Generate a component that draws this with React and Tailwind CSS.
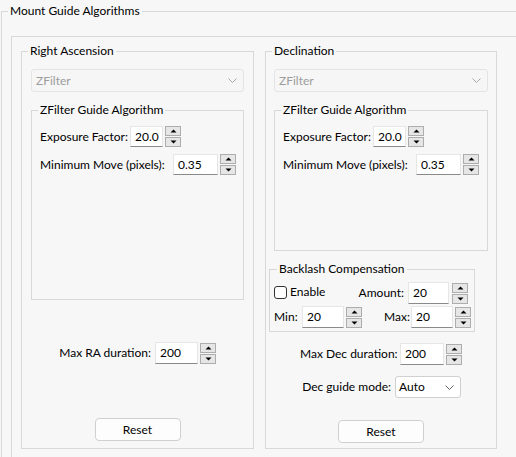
import React from "react";

const Arrow = ({ down }) => (
  <svg width="7" height="4" viewBox="0 0 7 4">
    <path d={down ? "M0.5 0.5h6L3.5 3.5z" : "M3.5 0.5L6.5 3.5h-6z"} fill="#000" />
  </svg>
);

const Spin = ({ h = "h-[10px]", ml = "ml-[2px]" }) => (
  <div className={`flex flex-col gap-[1px] ${ml}`}>
    <div className={`w-[16px] ${h} border border-[#adadad] bg-[#e6e6e6] flex items-center justify-center`}>
      <Arrow />
    </div>
    <div className={`w-[16px] ${h} border border-[#adadad] bg-[#e6e6e6] flex items-center justify-center`}>
      <Arrow down />
    </div>
  </div>
);

const NumBox = ({ value, w, h = "h-[21px]" }) => (
  <div
    className={`${w} ${h} bg-white border border-[#e6e6e6] border-b-[#8a8a8a] flex items-center pl-[4px] text-black`}
  >
    {value}
  </div>
);

const Chevron = ({ color = "#a8a8a8" }) => (
  <svg width="9" height="5" viewBox="0 0 9 5" fill="none">
    <path d="M0.5 0.5L4.5 4.5L8.5 0.5" stroke={color} strokeWidth="1" />
  </svg>
);

const DisabledCombo = () => (
  <div className="h-[23px] border border-[#e4e4e4] rounded-[3px] bg-[#f6f6f6] flex items-center justify-between pl-[4px] pr-[6px] text-[#9c9c9c]">
    <span>ZFilter</span>
    <Chevron />
  </div>
);

const Group = ({ title, className = "", children }) => (
  <fieldset className={`border border-[#d8d8d8] pl-[6px] ${className}`}>
    <legend className="px-[2px] leading-[16px]">{title}</legend>
    {children}
  </fieldset>
);

const ZFilterGroup = ({ pb }) => (
  <Group title="ZFilter Guide Algorithm" className={`mt-[10px] ${pb}`}>
    <div className="flex flex-col gap-[7px] pt-[8px] pl-[2px]">
      <div className="flex items-center">
        <span className="w-[90px]">Exposure Factor:</span>
        <NumBox value="20.0" w="w-[33px]" />
        <Spin />
      </div>
      <div className="flex items-center">
        <span className="w-[133px]">Minimum Move (pixels):</span>
        <NumBox value="0.35" w="w-[45px]" />
        <Spin />
      </div>
    </div>
  </Group>
);

const ResetButton = ({ mt }) => (
  <div className={`flex justify-center ${mt}`}>
    <button className="w-[86px] h-[23px] bg-[#fdfdfd] border border-[#d0d0d0] rounded-[4px] text-black">
      Reset
    </button>
  </div>
);

export default function App() {
  return (
    <div className="w-[516px] h-[457px] overflow-hidden whitespace-nowrap bg-[#f7f7f7] text-[12px] leading-[16px] text-black font-['Lato','Noto_Sans',sans-serif]">
      <fieldset className="mt-[3px] ml-[1px] w-[600px] border-l border-t border-[#d8d8d8] pl-[6px] pt-[17px]">
        <legend className="px-[2px] leading-[16px]">Mount Guide Algorithms</legend>
        <div className="ml-[3px] border-l border-t border-[#d8d8d8] pt-[6px] pl-[9px] h-[460px]">
          <div className="flex gap-[11px] items-stretch">
            {/* Right Ascension */}
            <Group title="Right Ascension" className="w-[233px] shrink-0 pb-[7px]">
              <div className="pt-[10px] pl-[3px] pr-[9px]">
                <DisabledCombo />
                <ZFilterGroup pb="pb-[124px]" />
                <div className="flex justify-center items-center mt-[42px]">
                  <span className="w-[92px] text-right">Max RA duration:</span>
                  <div className="w-[4px]" />
                  <NumBox value="200" w="w-[43px]" h="h-[22px]" />
                  <Spin />
                </div>
                <ResetButton mt="mt-[54px]" />
              </div>
            </Group>

            {/* Declination */}
            <Group title="Declination" className="w-[232px] shrink-0 pb-[5px]">
              <div className="pt-[10px] pl-[2px] pr-[8px]">
                <DisabledCombo />
                <ZFilterGroup pb="pb-[75px]" />
                <fieldset className="ml-[-5px] w-[206px] mt-[10px] border border-[#d8d8d8] pl-[7px] pb-[3px]">
                  <legend className="px-[2px] leading-[16px]">Backlash Compensation</legend>
                  <div className="pt-[5px] ml-[-3px] flex flex-col gap-[2px]">
                    <div className="flex items-center h-[22px]">
                      <div className="w-[80px] flex items-center self-start mt-[2px]">
                        <div className="w-[13px] h-[13px] rounded-[3px] border border-[#333] bg-white" />
                        <span className="ml-[3px]">Enable</span>
                      </div>
                      <span className="w-[50px] text-right">Amount:</span>
                      <div className="w-[4px]" />
                      <NumBox value="20" w="w-[41px]" h="h-[22px]" />
                      <Spin ml="ml-[3px]" />
                    </div>
                    <div className="flex items-center h-[22px]">
                      <span className="w-[28px]">Min:</span>
                      <NumBox value="20" w="w-[42px]" h="h-[22px]" />
                      <Spin ml="ml-[2px]" />
                      <span className="w-[48px] text-right">Max:</span>
                      <div className="w-[1px]" />
                      <NumBox value="20" w="w-[42px]" h="h-[22px]" />
                      <Spin ml="ml-[2px]" />
                    </div>
                  </div>
                </fieldset>
                <div className="flex justify-center items-center mt-[11px]">
                  <span className="w-[96px] text-right">Max Dec duration:</span>
                  <div className="w-[4px]" />
                  <NumBox value="200" w="w-[44px]" h="h-[22px]" />
                  <Spin />
                </div>
                <div className="flex justify-center items-center mt-[11px]">
                  <span className="w-[90px] text-right">Dec guide mode:</span>
                  <div className="w-[4px]" />
                  <div className="w-[66px] h-[22px] bg-white border border-[#d0d0d0] rounded-[3px] flex items-center justify-between pl-[3px] pr-[6px]">
                    <span>Auto</span>
                    <Chevron color="#666" />
                  </div>
                </div>
                <ResetButton mt="mt-[22px]" />
              </div>
            </Group>
          </div>
        </div>
      </fieldset>
    </div>
  );
}
